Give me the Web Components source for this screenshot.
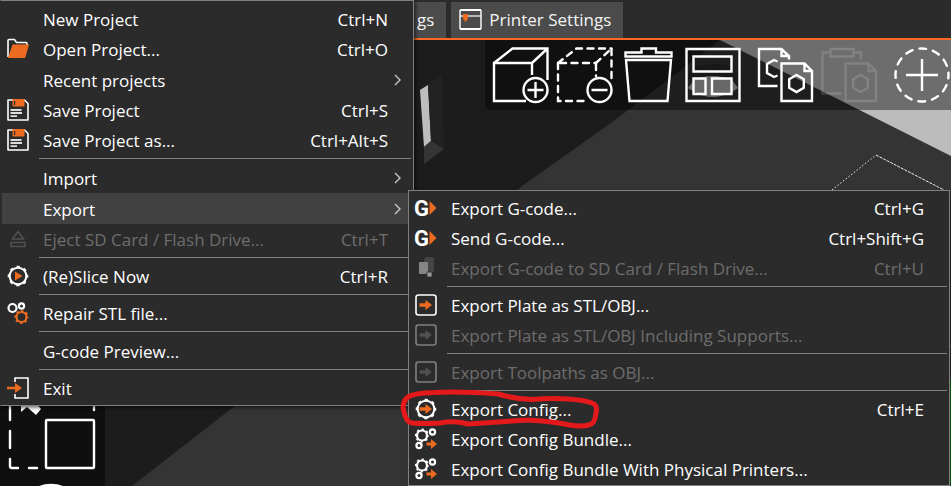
<!DOCTYPE html>
<html lang="en">
<head>
<meta charset="utf-8">
<title>Slicer – Export menu</title>
<style>
html, body { margin: 0; height: 100%; }
body { overflow: hidden; background: #2b2b2b; color: #fff; font: 17px/30px "Open Sans", "Noto Sans", sans-serif; }
</style>
</head>
<body>
<slicer-app></slicer-app>
<script>
const gear = (x, y, r, w, c = '#fff') => {
  const n = 2 * Math.PI * (r + 1) / 8;
  return `<g fill="none" stroke="${c}"><circle cx="${x}" cy="${y}" r="${r}" stroke-width="${w}"/><circle cx="${x}" cy="${y}" r="${r + 1}" stroke-width="${w}" stroke-dasharray="${n * 0.45} ${n * 0.55}" stroke-dashoffset="${n * 0.225}"/></g>`;
};
const arrow = (x, y, c) => `<path fill="${c}" d="M${x} ${y - 1.8}h6v-3.2l6.500 5-6.500 5v-3.200h-6z"/>`;
const O = '#ed6b21';
const save = `<path d="M1 1h16.500l3.500 3.500V21H1z" fill="none" stroke="#fff" stroke-width="1.600" stroke-linejoin="round"/><path d="M5.500 0h12v6.500q0 1-1 1h-10q-1 0-1-1z" fill="${O}"/><path d="M7 2h1.200v4H7z" fill="#2b2b2b"/><path d="M3.500 11h11M3.500 14h11.500M3.500 17.200h6.500" stroke="#ddd" stroke-width="1.800"/>`;
const gcode = `<text x="-1" y="19" font-family="Roboto, sans-serif" font-weight="700" font-size="22" fill="#fff">G</text><path d="M14.500 4l7 7-7 7z" fill="${O}"/>`;
const box = (s, a) => `<rect x="1" y="1" width="20" height="20" rx="2.500" fill="none" stroke="${s}" stroke-width="1.600"/>${arrow(4.5, 11, a)}`;
const bundle = gear(7, 7.5, 5, 2.2) + `<g fill="none" stroke="#fff" stroke-width="2.200"><circle cx="17.500" cy="4" r="2.600"/><circle cx="4" cy="17.500" r="2.600"/></g>` +
  `<path fill="${O}" d="M11.500 14.500h4.500v-3.500l6 5-6 5v-3.500h-4.500z"/>`;
const page = `<path d="M24.500 16.500H47.500L55 24V54H24.500zM47.500 16.500V24H55"/><path d="M39.500 28l7.300 4.200v8.600l-7.300 4.200-7.300-4.200v-8.600z"/>`;

const ICONS = {
  open: `<path d="M1 19V2.500q0-1 1-1h5.500l2 3H19q1 0 1 1V7" fill="none" stroke="#fff" stroke-width="1.600"/><path d="M5.500 6.500H22L18.500 19q-.300 1-1.300 1H1z" fill="${O}"/>`,
  save,
  eject: `<path d="M11 3.500L16.500 11h-11zM4 14.500h14v4H4z" fill="none" stroke="#505050" stroke-width="1.600"/>`,
  slice: gear(11, 11, 8.3, 2) + `<path d="M8 6.500l7.500 4.500L8 15.500z" fill="${O}"/>`,
  repair: `<g fill="none" stroke="#fff" stroke-width="2.200"><circle cx="5.500" cy="6" r="4"/><circle cx="14.500" cy="4" r="2.600"/></g>` + gear(14.5, 15, 5, 2.2, O),
  exit: `<path d="M8 5V1h13v20H8v-4" fill="none" stroke="#fff" stroke-width="1.600"/><path d="M0 9.800h8V6l7 5-7 5v-3.800H0z" fill="${O}"/>`,
  gcode,
  sd: `<path d="M9 2l2-2h6q2 0 2 2v13H9z" fill="#454545"/><path d="M4 5h9v12H4z" fill="#858585"/><path d="M12 15h5v5h-5z" fill="#9a9a9a" stroke="#2b2b2b" stroke-width=".8"/>`,
  box: box('#fff', O),
  boxoff: box('#808080', '#505050'),
  config: gear(11, 11, 8.3, 2) + arrow(4.5, 11, O),
  bundle,
  printer: `<g fill="none" stroke="#fff"><path d="M1 1h21M1 20h21" stroke-width="2"/><path d="M1 1v19M22 1v19" stroke-width="1.400"/><path d="M1 7h21" stroke-width="1.200"/></g><path d="M4 5h5v5l-1.500 1v1.500h-2V11L4 10z" fill="${O}"/>`,
  add: `<path d="M33 54H1V16H39V28M1 16L19.500 1.500H54.500V33M39 16L54.500 1.500"/><circle cx="42.500" cy="43" r="12"/><path d="M34.500 43h16M42.500 35v16"/>`,
  remove: `<g stroke-dasharray="6 5.500" stroke-linecap="round"><path d="M1 16V54H32"/><path d="M3 16H39"/><path d="M1 16L19.500 1.500H54.500"/><path d="M54.500 2V32"/><path d="M39 16L54.500 1.500"/><path d="M39 17V29"/></g><circle cx="42.500" cy="43" r="12"/><path d="M34.500 43h16"/>`,
  trash: `<path d="M4.500 9.500V5.500H20.500V1.500H35V5.500H50.500V9.500z"/><path d="M5 13H50L46.500 54H8.500z"/>`,
  arrange: `<path d="M1.500 2h53v52h-53zM8.500 9.500h38v15h-38zM8.500 31.500h12v15.500h-12zM27 31.500h19.500v15.500H27z"/>`,
  copy: `<path d="M20.500 39H2V2H24.500L32 9V12.500M24.500 2V9H32"/><path d="M20.500 14.500L17 13l-7 4v9l7 4 3.500-1.500"/>${page}`,
  paste: `<g opacity=".14"><path d="M20.500 46.500H1.500V5.500H9.500M32.500 5.500H40V12.500"/><path d="M9.500 2h23v7.500h-23z"/>${page}</g>`,
  instance: `<circle cx="29" cy="28" r="26.500" stroke-dasharray="7 6.870" stroke-dashoffset="3.500" stroke-linecap="round"/><path d="M13 28h32M29 12v32"/>`,
};

class Base extends HTMLElement {
  connectedCallback() {
    if (!this.shadowRoot) this.attachShadow({ mode: 'open' }).innerHTML = this.render();
  }
}

class UiIcon extends Base {
  render() {
    const big = this.hasAttribute('big');
    const s = big ? 56 : 22;
    return `<style>:host{display:block;flex:none;width:${s}px;height:${s}px}svg{display:block;overflow:visible}</style>
      <svg width="${s}" height="${s}" viewBox="0 0 ${s} ${s}" aria-hidden="true" ${big ? 'fill="none" stroke="#fff" stroke-width="2.400"' : ''}>${ICONS[this.getAttribute('name')] || ''}</svg>`;
  }
}
customElements.define('ui-icon', UiIcon);

class AppTab extends Base {
  render() {
    return `<style>
      :host{display:block}
      button{display:flex;align-items:center;gap:8px;height:36px;margin:0;border:0;padding:0 12px 0 8px;background:#4b4b4b;color:#f4f4f4;font:inherit;white-space:nowrap}
      :host([cut]) button{padding-left:4px}
    </style><button type="button" role="tab"><slot></slot></button>`;
  }
}
customElements.define('app-tab', AppTab);

class ToolButton extends Base {
  render() {
    return `<style>
      :host{display:block;flex:none}
      :host([apart]){margin-left:8px}
      button{display:block;border:0;margin:0;padding:0;background:none}
    </style><button type="button" aria-label="${this.getAttribute('label')}"><ui-icon big name="${this.getAttribute('icon')}"></ui-icon></button>`;
  }
}
customElements.define('tool-button', ToolButton);

class MenuItem extends Base {
  render() {
    const a = n => this.getAttribute(n);
    return `<style>
      :host{display:block}
      button{display:flex;align-items:center;box-sizing:border-box;width:100%;height:30px;margin:0;border:0;padding:0 0 0 5px;background:none;color:#fff;font:inherit;text-align:left;white-space:nowrap}
      :host([tall]) button{height:31px}
      :host([active]) button{background:#414141}
      button:disabled{color:#6d6d6d}
      .label,.keys{padding-top:2px;line-height:28px}
      .label{flex:1;padding-left:14px}
      .end{display:flex;align-items:center;width:24px;flex:none}
      svg{margin-left:6px}
    </style>
    <button type="button" role="menuitem" ${this.hasAttribute('off') ? 'disabled' : ''}>
      <ui-icon name="${a('icon') || ''}"></ui-icon>
      <span class="label"><slot></slot></span>
      ${a('keys') ? `<span class="keys">${a('keys')}</span>` : ''}
      <span class="end">${this.hasAttribute('sub') ? '<svg width="8" height="12" viewBox="0 0 8 12" fill="none" stroke="#c8c8c8" stroke-width="1.400"><path d="M1 1l5 5-5 5"/></svg>' : ''}</span>
    </button>`;
  }
}
customElements.define('menu-item', MenuItem);

class MenuRule extends Base {
  render() {
    return `<style>:host{display:block;padding:3px 1px 3px 37px}hr{margin:0;border:0;height:1px;background:#808080}</style><hr>`;
  }
}
customElements.define('menu-rule', MenuRule);

class MenuPanel extends Base {
  render() {
    return `<style>
      :host{display:block;box-sizing:border-box;background:#2b2b2b;border:1px solid #808080;padding:2px 1px;box-shadow:2px 2px 3px rgba(0,0,0,.5)}
    </style><div role="menu"><slot></slot></div>`;
  }
}
customElements.define('menu-panel', MenuPanel);

class SceneView extends Base {
  render() {
    return `<style>:host{display:block;overflow:hidden;background:#1c1c1c}svg{display:block;width:100%;height:100%}</style>
    <svg viewBox="0 40 951 446" preserveAspectRatio="xMinYMin slice" aria-hidden="true">
      <path d="M132 486L236 405 525 184 615 120 720 40H951V486z" fill="#343434"/>
      <path d="M720 40H951V156z" fill="#bcbcbc"/>
      <path d="M688 88l6-8 6-2q12-5 26 0l6 2 6 8-6 4q-20 10-38 0z" fill="#b4b4b4"/>
      <path d="M688 80q0-15 25-16t25 16q-10-4-25-4t-25 4z" fill="#2a2a2a"/>
      <path d="M420 90l8-5 3 56-7 6z" fill="#bdbdbd"/>
      <path d="M428 85l14-11 2 75-13-8z" fill="#222"/>
      <path d="M424 147l7-6 13 8-20 15z" fill="#353535"/>
      <path d="M832 190L876 155" fill="none" stroke="#eee" stroke-dasharray="1.500 2"/><path d="M876 155l68 35" fill="none" stroke="#eee" stroke-dasharray="3 1"/>
      <path d="M950 346h1" stroke="#999"/>
      <path d="M950 379h1v107h-1z" fill="#0a8a0a"/>
    </svg>`;
  }
}
customElements.define('scene-view', SceneView);

class SideTools extends Base {
  render() {
    return `<style>:host{display:block;background:#0f0f0f}svg{display:block}</style>
    <svg width="105" height="80" viewBox="0 406 105 80" aria-hidden="true">
      <g fill="none" stroke="#fff" stroke-width="2.400" stroke-linecap="round">
        <path d="M10 400v20M10 431v17M10 459v7q0 2 2 2h6M29 468h8M94 400v10"/>
        <rect x="46" y="420" width="48" height="48" rx="1"/>
        <circle cx="51" cy="516" r="31"/>
      </g>
      <path d="M21 404v8l6-5 9 8 5-6-5-6z" fill="#fff"/>
    </svg>`;
  }
}
customElements.define('side-tools', SideTools);

class SlicerApp extends Base {
  render() {
    return `<style>
      :host{display:grid;grid-template-rows:auto 1fr;position:relative;height:100%;min-height:100vh;overflow:hidden}
      header{display:flex;gap:5px;padding:2px 0 0 413px;border-bottom:2px solid #fb6724}
      main{display:grid;min-width:0;min-height:0;overflow:hidden}
      main > *{grid-area:1/1}
      .tools{justify-self:end;align-self:start;display:flex;gap:8px;box-sizing:border-box;width:calc(100% - 485px);padding:7px 0 7px 8px;background:rgba(0,0,0,.42);border-radius:0 0 0 5px;overflow:hidden}
      side-tools{justify-self:start;align-self:end;width:105px}
      .root{position:absolute;left:0;top:0;width:414px;border-left-color:#2b2b2b}
      .export{position:absolute;left:408px;top:190px;right:1px;padding-bottom:1px}
      .mark{position:absolute;left:400px;top:386px}
    </style>
    <header role="tablist">
      <app-tab cut>gs</app-tab>
      <app-tab><ui-icon name="printer"></ui-icon>Printer Settings</app-tab>
    </header>
    <main>
      <scene-view></scene-view>
      <div class="tools" role="toolbar">
        <tool-button icon="add" label="Add"></tool-button>
        <tool-button icon="remove" label="Delete"></tool-button>
        <tool-button icon="trash" label="Delete all"></tool-button>
        <tool-button icon="arrange" label="Arrange"></tool-button>
        <tool-button apart icon="copy" label="Copy"></tool-button>
        <tool-button icon="paste" label="Paste"></tool-button>
        <tool-button apart icon="instance" label="Add instance"></tool-button>
      </div>
      <side-tools></side-tools>
    </main>
    <menu-panel class="root">
      <menu-item tall keys="Ctrl+N">New Project</menu-item>
      <menu-item icon="open" keys="Ctrl+O">Open Project...</menu-item>
      <menu-item tall sub>Recent projects</menu-item>
      <menu-item icon="save" keys="Ctrl+S">Save Project</menu-item>
      <menu-item icon="save" keys="Ctrl+Alt+S">Save Project as...</menu-item>
      <menu-rule></menu-rule>
      <menu-item tall sub>Import</menu-item>
      <menu-item tall sub active>Export</menu-item>
      <menu-item off icon="eject" keys="Ctrl+T">Eject SD Card / Flash Drive...</menu-item>
      <menu-rule></menu-rule>
      <menu-item icon="slice" keys="Ctrl+R">(Re)Slice Now</menu-item>
      <menu-rule></menu-rule>
      <menu-item icon="repair">Repair STL file...</menu-item>
      <menu-rule></menu-rule>
      <menu-item tall>G-code Preview...</menu-item>
      <menu-rule></menu-rule>
      <menu-item icon="exit">Exit</menu-item>
    </menu-panel>
    <menu-panel class="export">
      <menu-item icon="gcode" keys="Ctrl+G">Export G-code...</menu-item>
      <menu-item icon="gcode" keys="Ctrl+Shift+G">Send G-code...</menu-item>
      <menu-item off icon="sd" keys="Ctrl+U">Export G-code to SD Card / Flash Drive...</menu-item>
      <menu-rule></menu-rule>
      <menu-item icon="box">Export Plate as STL/OBJ...</menu-item>
      <menu-item off icon="boxoff">Export Plate as STL/OBJ Including Supports...</menu-item>
      <menu-rule></menu-rule>
      <menu-item off icon="boxoff">Export Toolpaths as OBJ...</menu-item>
      <menu-rule></menu-rule>
      <menu-item icon="config" keys="Ctrl+E">Export Config...</menu-item>
      <menu-item icon="bundle">Export Config Bundle...</menu-item>
      <menu-item icon="bundle">Export Config Bundle With Physical Printers...</menu-item>
    </menu-panel>
    <svg class="mark" width="204" height="46" viewBox="0 0 204 46" fill="none" stroke="#e3191b" stroke-width="5" stroke-linecap="round" stroke-linejoin="round" aria-hidden="true">
      <path d="M12 37Q6 36 4 26Q1 17 8 11Q14 7 34 6.500Q60 5 98 8Q114 13 132 13.500Q150 12 168 13Q184 14 192 17Q198 19 196 27Q195 38 189 39Q182 41 170 39Q150 35 128 34Q100 36 68 38Q54 34 40 37Q24 38 12 37"/>
    </svg>`;
  }
}
customElements.define('slicer-app', SlicerApp);
</script>
</body>
</html>
